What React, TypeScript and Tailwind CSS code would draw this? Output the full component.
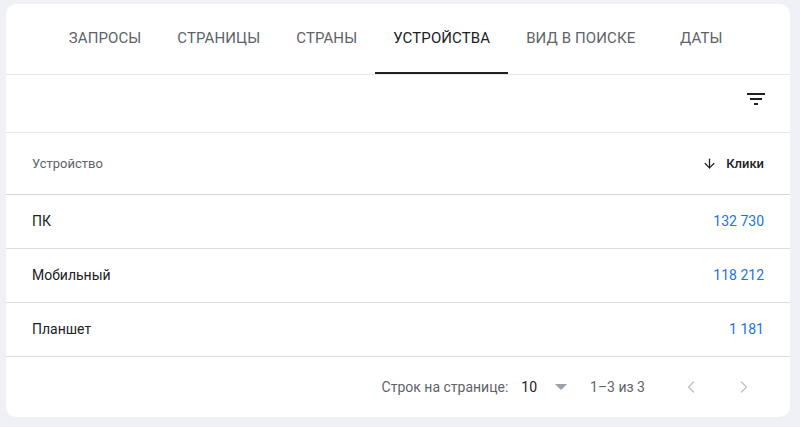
import { ArrowDown, ChevronLeft, ChevronRight } from 'lucide-react'

const TABS = ['Запросы', 'Страницы', 'Страны', 'Устройства', 'Вид в поиске', 'Даты']

const ROWS = [
  { name: 'ПК', clicks: '132 730' },
  { name: 'Мобильный', clicks: '118 212' },
  { name: 'Планшет', clicks: '1 181' },
]

function FilterIcon() {
  return (
    <svg width="24" height="24" viewBox="0 0 24 24" fill="#202124">
      <path d="M10 18h4v-2h-4v2zM3 6v2h18V6H3zm3 7h12v-2H6v2z" />
    </svg>
  )
}

export default function App() {
  const active = 3
  return (
    <div className="h-[427px] w-[800px] bg-[#eff1f6] pl-[6px] pr-[10px] pt-[4px] font-['Roboto',sans-serif]">
      <div className="flex h-[413px] flex-col overflow-hidden rounded-[10px] bg-white">
        {/* вкладки */}
        <div className="flex h-[71px] justify-center border-b border-[#e5e7eb] pl-[4px]">
          {TABS.map((t, i) => (
            <div
              key={t}
              className={`relative flex items-center justify-center px-[18px] pb-[2px] text-[15px] uppercase tracking-[0.1px] ${
                i === active ? 'text-[#202124]' : 'text-[#5f6368]'
              } ${i === TABS.length - 1 ? 'min-w-[96px]' : ''}`}
            >
              {t}
              {i === active && <span className="absolute bottom-0 left-0 right-0 h-[2px] bg-[#202124]" />}
            </div>
          ))}
        </div>

        {/* фильтр */}
        <div className="flex h-[58px] items-start justify-end border-b border-[#e5e7eb] pr-[22px] pt-[12px]">
          <FilterIcon />
        </div>

        {/* заголовок таблицы */}
        <div className="flex h-[62px] items-center justify-between border-b border-[#d4d6da] px-[26px] text-[13px]">
          <span className="text-[#5f6368]">Устройство</span>
          <span className="flex items-center gap-[9px] font-medium text-[#202124]">
            <ArrowDown size={15} strokeWidth={2} />
            Клики
          </span>
        </div>

        {ROWS.map((r) => (
          <div
            key={r.name}
            className="flex h-[54px] items-center justify-between border-b border-[#dadce0] px-[26px] text-[14px]"
          >
            <span className="text-[#202124]">{r.name}</span>
            <span className="text-[#1a73e8]">{r.clicks}</span>
          </div>
        ))}

        {/* пагинация */}
        <div className="flex flex-1 items-center justify-end pr-[36px] text-[14px] text-[#5f6368]">
          <span>Строк на странице:</span>
          <span className="ml-[13px] text-[#202124]">10</span>
          <svg className="ml-[18px]" width="12" height="6" viewBox="0 0 12 6">
            <path d="M0 0h12L6 6z" fill="#9aa0a6" />
          </svg>
          <span className="ml-[23px]">1–3 из 3</span>
          <ChevronLeft className="ml-[36px]" size={20} color="#bdc1c6" strokeWidth={1.6} />
          <ChevronRight className="ml-[33px]" size={20} color="#bdc1c6" strokeWidth={1.6} />
        </div>
      </div>
    </div>
  )
}
